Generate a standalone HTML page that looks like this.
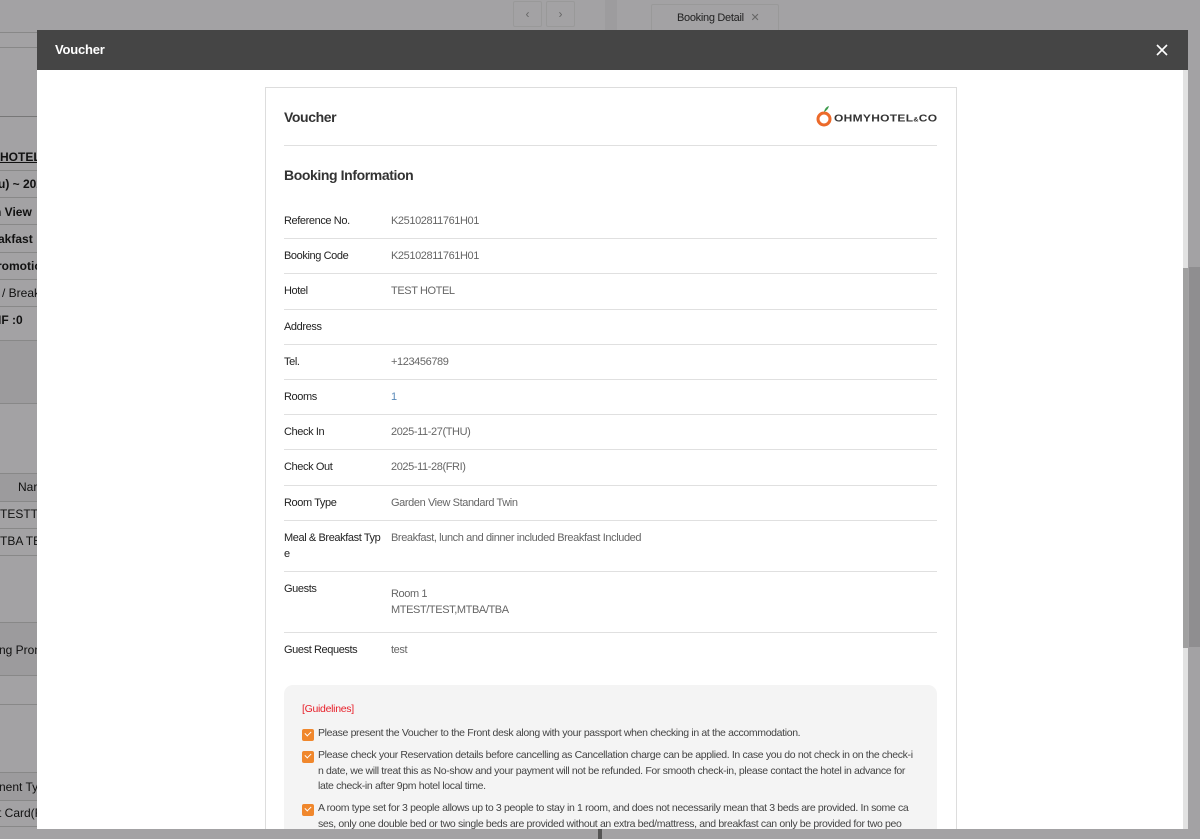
<!DOCTYPE html>
<html style="overflow:hidden;width:1200px;height:839px"><head><meta charset="utf-8">
<style>
*{margin:0;padding:0;box-sizing:border-box}
body{width:1200px;height:839px;overflow:hidden;background:#a3a2a4;font-family:"Liberation Sans",sans-serif;position:relative;color:#222}
.a{position:absolute}
.bg{font-size:12px;color:#111;font-weight:bold;left:0}
.hl{position:absolute;left:0;width:37px;height:1px;background:#888}
.lab{position:absolute;left:284px;font-size:11px;color:#222;letter-spacing:-0.4px;line-height:16px;margin-top:1px}
.val{position:absolute;left:391px;font-size:11px;color:#666;letter-spacing:-0.4px;line-height:16px;margin-top:1px}
.sep{position:absolute;left:284px;width:653px;height:1px;background:#e0e0e0}
.gl{position:absolute;left:318px;width:605px;font-size:10.5px;color:#444;line-height:15.5px;letter-spacing:-0.35px}
.cb{position:absolute;left:302px;width:12px;height:12px;background:#f0872c;border-radius:2px}
.cb:after{content:"";position:absolute;left:3px;top:2px;width:5px;height:3px;border-left:1.3px solid #fff;border-bottom:1.3px solid #fff;transform:rotate(-45deg)}
</style></head><body>
<div class="a" style="left:513px;top:1px;width:29px;height:26px;border:1px solid #999;border-radius:2px;color:#666;font-size:12px;text-align:center;line-height:24px">‹</div>
<div class="a" style="left:546px;top:1px;width:29px;height:26px;border:1px solid #999;border-radius:2px;color:#666;font-size:12px;text-align:center;line-height:24px">›</div>
<div class="a" style="left:605px;top:0;width:12px;height:30px;background:#9d9c9e"></div>
<div class="a" style="left:651px;top:4px;width:128px;height:28px;border:1px solid #999;border-bottom:none;border-radius:2px 2px 0 0;font-size:11px;color:#222;padding-left:25px;line-height:26px;letter-spacing:-0.3px">Booking Detail <span style="color:#666;margin-left:4px">✕</span></div>
<div class="hl" style="top:32px"></div><div class="hl" style="top:47px"></div>
<div class="a" style="left:0;top:116px;width:37px;height:1px;background:#777"></div>
<div class="a bg" style="top:150px;text-decoration:underline">HOTEL</div>
<div class="hl" style="top:170px"></div>
<div class="a bg" style="top:177px;left:-2px">u) ~ 202</div><div class="hl" style="top:197px"></div>
<div class="a bg" style="top:205px;left:-6px">n View</div><div class="hl" style="top:224px"></div>
<div class="a bg" style="top:232px;left:-2px">akfast</div><div class="hl" style="top:252px"></div>
<div class="a bg" style="top:259px;left:-3px">romotio</div><div class="hl" style="top:279px"></div>
<div class="a bg" style="top:286px;left:-4px;font-weight:normal">l / Break</div><div class="hl" style="top:306px"></div>
<div class="a bg" style="top:313px;left:-2px">IF :0</div>
<div class="a" style="left:0;top:340px;width:37px;height:64px;background:#9c9b9d;border-top:1px solid #888;border-bottom:1px solid #888"></div>
<div class="a" style="left:0;top:473px;width:37px;height:28px;background:#9c9b9d;border-top:1px solid #888"></div>
<div class="a bg" style="top:480px;left:18px;font-weight:normal">Nar</div>
<div class="hl" style="top:501px"></div>
<div class="a bg" style="top:507px;left:0;font-weight:normal">TESTTE</div><div class="hl" style="top:528px"></div>
<div class="a bg" style="top:534px;left:0;font-weight:normal">TBA TB</div><div class="hl" style="top:555px"></div>
<div class="a" style="left:0;top:622px;width:37px;height:54px;background:#9c9b9d;border-top:1px solid #888;border-bottom:1px solid #888"></div>
<div class="a bg" style="top:643px;left:-1px;font-weight:normal">ng Pron</div>
<div class="hl" style="top:704px"></div>
<div class="a" style="left:0;top:772px;width:37px;height:28px;background:#9c9b9d;border-top:1px solid #888"></div>
<div class="a bg" style="top:780px;left:-1px;font-weight:normal">nent Ty</div><div class="hl" style="top:800px"></div>
<div class="a bg" style="top:806px;left:-2px;font-weight:normal">t Card(F</div><div class="hl" style="top:826px"></div>
<div class="a" style="left:1188px;top:70px;width:12px;height:769px;background:#a3a2a4"></div>
<div class="a" style="left:1189px;top:267px;width:11px;height:380px;background:#8f8e90"></div>
<div class="a" style="left:37px;top:30px;width:1151px;height:40px;background:#454545;color:#fff;font-weight:bold;font-size:13px;line-height:40px;padding-left:18px;letter-spacing:-0.2px">Voucher</div>
<svg class="a" style="left:1156px;top:44px" width="12" height="12" viewBox="0 0 12 12"><path d="M1 1L11 11M11 1L1 11" stroke="#fff" stroke-width="1.6"/></svg>
<div class="a" style="left:37px;top:70px;width:1151px;height:759px;background:#fff;overflow:hidden">
<div class="a" style="left:1146px;top:0;width:5px;height:759px;background:#e2e2e2"></div>
<div class="a" style="left:1146px;top:198px;width:5px;height:380px;background:#a0a0a0"></div>
<div class="a" style="left:228px;top:17px;width:692px;height:760px;border:1px solid #ddd"></div>
</div>
<div class="a" style="left:284px;top:109px;font-size:14px;font-weight:bold;color:#333;letter-spacing:-0.4px">Voucher</div>
<svg class="a" style="left:814px;top:104px" width="22" height="26" viewBox="0 0 22 26"><circle cx="10" cy="15" r="6" fill="none" stroke="#ec6a2a" stroke-width="3"/><path d="M10 8 Q11 3 15 2 Q14 6 10 8Z" fill="#3a9a4a"/></svg>
<div class="a" style="left:834px;top:111px;font-size:12px;font-weight:bold;color:#333;letter-spacing:0.3px;transform:scaleY(0.85)">OHMYHOTEL<span style="font-size:7px">&amp;</span>CO</div>
<div class="sep" style="top:145px"></div>
<div class="a" style="left:284px;top:167px;font-size:14px;font-weight:bold;color:#333;letter-spacing:-0.4px">Booking Information</div>
<div class="lab" style="top:212px">Reference No.</div><div class="val" style="top:212px">K25102811761H01</div>
<div class="sep" style="top:238px"></div>
<div class="lab" style="top:247px">Booking Code</div><div class="val" style="top:247px">K25102811761H01</div>
<div class="sep" style="top:273px"></div>
<div class="lab" style="top:282px">Hotel</div><div class="val" style="top:282px">TEST HOTEL</div>
<div class="sep" style="top:309px"></div>
<div class="lab" style="top:318px">Address</div>
<div class="sep" style="top:344px"></div>
<div class="lab" style="top:353px">Tel.</div><div class="val" style="top:353px">+123456789</div>
<div class="sep" style="top:379px"></div>
<div class="lab" style="top:388px">Rooms</div><div class="val" style="top:388px;color:#5a8ab8">1</div>
<div class="sep" style="top:414px"></div>
<div class="lab" style="top:423px">Check In</div><div class="val" style="top:423px">2025-11-27(THU)</div>
<div class="sep" style="top:449px"></div>
<div class="lab" style="top:458px">Check Out</div><div class="val" style="top:458px">2025-11-28(FRI)</div>
<div class="sep" style="top:485px"></div>
<div class="lab" style="top:494px">Room Type</div><div class="val" style="top:494px">Garden View Standard Twin</div>
<div class="sep" style="top:520px"></div>
<div class="lab" style="top:529px">Meal &amp; Breakfast Typ<br>e</div><div class="val" style="top:529px">Breakfast, lunch and dinner included Breakfast Included</div>
<div class="sep" style="top:571px"></div>
<div class="lab" style="top:580px">Guests</div><div class="val" style="top:585px">Room 1<br>MTEST/TEST,MTBA/TBA</div>
<div class="sep" style="top:632px"></div>
<div class="lab" style="top:641px">Guest Requests</div><div class="val" style="top:641px">test</div>
<div class="a" style="left:284px;top:685px;width:653px;height:144px;background:#f4f4f4;border-radius:9px 9px 0 0"></div>
<div class="a" style="left:302px;top:703px;font-size:10.5px;color:#e8202a;letter-spacing:-0.3px">[Guidelines]</div>
<div class="cb" style="top:729px"></div>
<div class="gl" style="top:726px">Please present the Voucher to the Front desk along with your passport when checking in at the accommodation.</div>
<div class="cb" style="top:751px"></div>
<div class="gl" style="top:748px">Please check your Reservation details before cancelling as Cancellation charge can be applied. In case you do not check in on the check-i<br>n date, we will treat this as No-show and your payment will not be refunded. For smooth check-in, please contact the hotel in advance for<br>late check-in after 9pm hotel local time.</div>
<div class="cb" style="top:804px"></div>
<div class="gl" style="top:801px;height:28px;overflow:hidden">A room type set for 3 people allows up to 3 people to stay in 1 room, and does not necessarily mean that 3 beds are provided. In some ca<br>ses, only one double bed or two single beds are provided without an extra bed/mattress, and breakfast can only be provided for two peo</div>
<div class="a" style="left:37px;top:829px;width:1151px;height:10px;background:#a3a2a4"></div>
<div class="a" style="left:598px;top:829px;width:4px;height:10px;background:#555"></div>
</body></html>
